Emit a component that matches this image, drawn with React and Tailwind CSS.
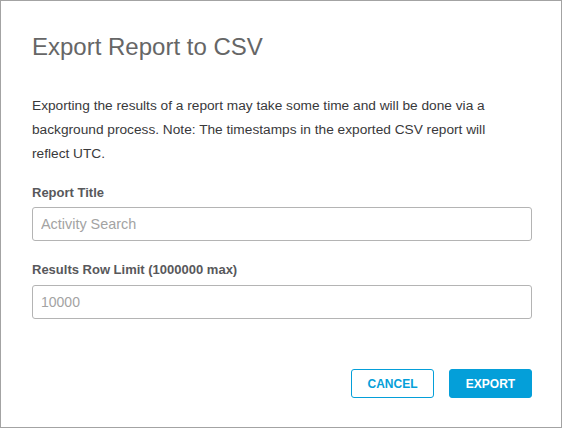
export default function App() {
  return (
    <div
      className="w-[562px] h-[428px] border border-[#a3a3a3] bg-white flex flex-col pl-[31px] pr-[29px] pt-[32px]"
      style={{ fontFamily: '"Liberation Sans", Arial, sans-serif' }}
    >
      <h1 className="text-[24px] leading-[28px] text-[#666666] font-normal">Export Report to CSV</h1>
      <p className="mt-[33px] max-w-[465px] text-[13.7px] leading-[24px] text-[#39393b]">
        Exporting the results of a report may take some time and will be done via a background process. Note: The
        timestamps in the exported CSV report will reflect UTC.
      </p>
      <label className="mt-[19px] text-[13px] leading-[16px] font-bold text-[#58585b]">Report Title</label>
      <input
        className="mt-[6px] h-[34px] w-full rounded-[3px] border border-[#b4b4b4] px-[8px] text-[14.4px] text-[#39393b] placeholder:text-[#a3a3a3] outline-none"
        placeholder="Activity Search"
      />
      <label className="mt-[21px] text-[13px] leading-[16px] font-bold text-[#58585b]">
        Results Row Limit (1000000 max)
      </label>
      <input
        className="mt-[7px] h-[34px] w-full rounded-[3px] border border-[#b4b4b4] px-[8px] text-[14px] text-[#39393b] placeholder:text-[#a3a3a3] outline-none"
        placeholder="10000"
      />
      <div className="mt-[50px] flex justify-end gap-[15px]">
        <button className="w-[83px] h-[29px] rounded-[3px] border border-[#049fd9] bg-white text-[12px] font-bold text-[#049fd9]">
          CANCEL
        </button>
        <button className="w-[83px] h-[29px] rounded-[3px] border border-[#049fd9] bg-[#049fd9] text-[12px] font-bold text-white">
          EXPORT
        </button>
      </div>
    </div>
  );
}
